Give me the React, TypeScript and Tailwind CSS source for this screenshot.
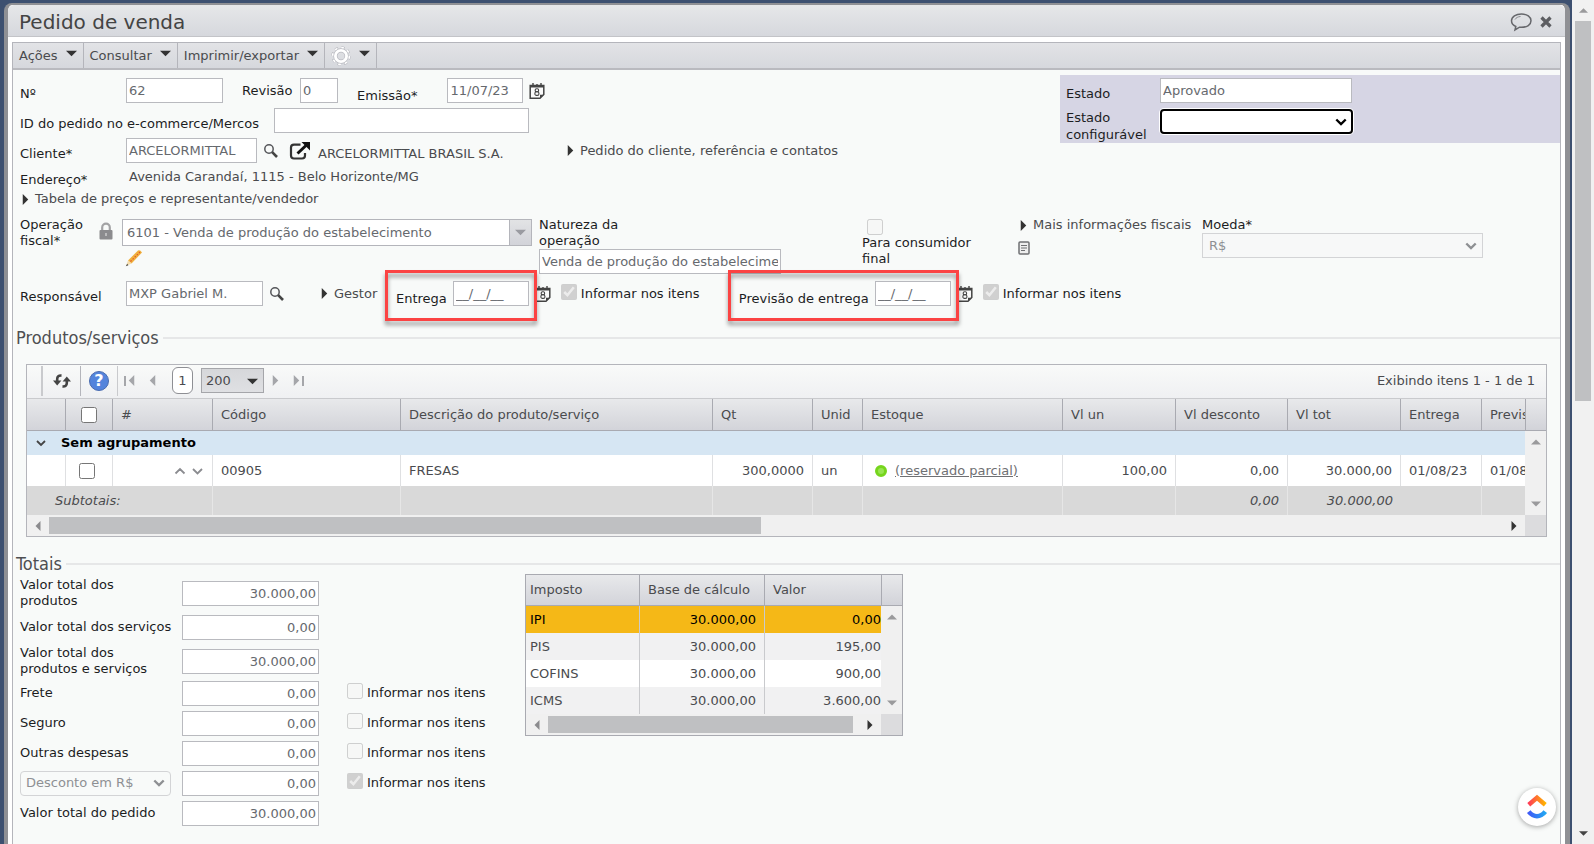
import { useState } from 'react'
import type { ReactNode } from 'react'
import clsx from 'clsx'

const inputClass = 'h-[25px] border border-[#b9babf] bg-white px-0.5 text-[13px] text-[#66696e] outline-none'

const gridColumns = [39, 47, 100, 188, 312, 100, 50, 200, 113, 112, 113, 81, 120]
const gridHeaders = ['#', 'Código', 'Descrição do produto/serviço', 'Qt', 'Unid', 'Estoque', 'Vl un', 'Vl desconto', 'Vl tot', 'Entrega', 'Previsão']

const taxes = [
  { name: 'IPI', base: '30.000,00', value: '0,00' },
  { name: 'PIS', base: '30.000,00', value: '195,00' },
  { name: 'COFINS', base: '30.000,00', value: '900,00' },
  { name: 'ICMS', base: '30.000,00', value: '3.600,00' },
]

const totals = [
  { id: 'total-produtos', label: 'Valor total dos produtos', value: '30.000,00', tall: true },
  { id: 'total-servicos', label: 'Valor total dos serviços', value: '0,00', tall: true },
  { id: 'total-geral', label: 'Valor total dos produtos e serviços', value: '30.000,00', tall: true },
  { id: 'frete', label: 'Frete', value: '0,00', check: true },
  { id: 'seguro', label: 'Seguro', value: '0,00', check: true },
  { id: 'outras', label: 'Outras despesas', value: '0,00', check: true },
  { id: 'desconto', label: 'Desconto em R$', value: '0,00', check: true, checked: true, select: true },
  { id: 'total-pedido', label: 'Valor total do pedido', value: '30.000,00' },
]

type Direction = 'up' | 'down' | 'left' | 'right'

const arrowPaths: Record<Direction, string> = {
  up: 'M0 7.5L5 2.5L10 7.5Z',
  down: 'M0 2.5L5 7.5L10 2.5Z',
  left: 'M7.5 0L2.5 5L7.5 10Z',
  right: 'M2.5 0L7.5 5L2.5 10Z',
}

function Arrow({ dir, className }: { dir: Direction; className?: string }) {
  return (
    <svg viewBox="0 0 10 10" className={clsx('shrink-0 fill-current', className)} aria-hidden="true">
      <path d={arrowPaths[dir]} />
    </svg>
  )
}

function SearchIcon() {
  return (
    <svg viewBox="0 0 16 16" className="h-4 w-4" fill="none" aria-hidden="true">
      <circle cx="6" cy="6" r="4.2" stroke="#55565a" strokeWidth="1.5" />
      <path d="M9.2 9.2L14 14" stroke="#444" strokeWidth="2.6" />
    </svg>
  )
}

function CalendarIcon() {
  return (
    <svg viewBox="0 0 16 18" className="h-[18px] w-4" fill="none" aria-hidden="true">
      <path d="M1.2 3.5H14.8V12.5L11 16.2H1.2Z" fill="#fafafa" stroke="#444" strokeWidth="1.5" />
      <path d="M1 4.3H15" stroke="#444" strokeWidth="2.4" />
      <path d="M4 1V3.5M12 1V3.5M8 2V3" stroke="#444" strokeWidth="1.4" />
      <path d="M11 16V12.7H14.6Z" fill="#444" />
      <rect x="6.2" y="6.7" width="3.4" height="3" rx="1.3" stroke="#444" strokeWidth="1.1" />
      <rect x="5.9" y="9.8" width="4" height="3.6" rx="1.5" stroke="#444" strokeWidth="1.1" />
    </svg>
  )
}

function LockIcon() {
  return (
    <svg viewBox="0 0 14 18" className="h-[18px] w-3.5" fill="none" aria-hidden="true">
      <path d="M3.2 9V5.5a3.8 3.8 0 0 1 7.6 0V9" stroke="#a3a3a5" strokeWidth="2.2" />
      <rect x="0.5" y="8" width="13" height="9.5" rx="1" fill="#8b8b8e" />
      <path d="M7 11V14" stroke="#c8c8ca" strokeWidth="1.6" />
    </svg>
  )
}

function PencilIcon() {
  return (
    <svg viewBox="0 0 18 18" className="h-[18px] w-[18px]" fill="none" aria-hidden="true">
      <path d="M3 11.5L13 1.5Q15 0.5 17 3.5L6.5 14.5Z" fill="#f0b03c" />
      <path d="M3 11.5L6.5 14.5L1 17Z" fill="#f3dcae" />
      <path d="M2.2 14.8L0.8 17.2L3.4 16.2Z" fill="#444" />
      <path d="M5.5 12.5L15 3" stroke="#e0572e" strokeWidth="1.2" strokeDasharray="1.5 1.5" />
    </svg>
  )
}

function ExternalIcon() {
  return (
    <svg viewBox="0 0 22 20" className="h-5 w-[22px]" fill="none" aria-hidden="true">
      <path d="M11.5 3.6H5Q2 3.6 2 6.6V14.5Q2 17.5 5 17.5H13Q16 17.5 16 14.5V12" stroke="#333" strokeWidth="2.2" />
      <path d="M8.5 12.5L17.5 4" stroke="#111" strokeWidth="3" />
      <path d="M12.5 1H21V9.5Z" fill="#111" />
    </svg>
  )
}

function GearIcon() {
  return (
    <svg viewBox="0 0 20 20" className="h-5 w-5" fill="none" aria-hidden="true">
      <circle cx="10" cy="10" r="8" stroke="#b9bac0" strokeWidth="3.4" strokeDasharray="3.2 3.08" />
      <circle cx="10" cy="10" r="8" stroke="#fff" strokeWidth="2.4" strokeDasharray="2.6 3.68" />
      <circle cx="10" cy="10" r="5.6" stroke="#b9bac0" strokeWidth="4.2" />
      <circle cx="10" cy="10" r="5.6" stroke="#fff" strokeWidth="2.8" />
    </svg>
  )
}

function RefreshIcon() {
  return (
    <svg viewBox="0 0 20 16" className="h-4 w-5" fill="none" aria-hidden="true">
      <path d="M9.5 2.6Q5.200 2.200 5.200 6V9" stroke="#444" strokeWidth="2.6" />
      <path d="M1 7.500H9.400L5.200 12.500Z" fill="#444" />
      <path d="M10.500 13.400Q14.800 13.800 14.800 10V7" stroke="#444" strokeWidth="2.6" />
      <path d="M10.600 8.500H19L14.800 3.500Z" fill="#444" />
    </svg>
  )
}

function ChatIcon() {
  return (
    <svg viewBox="0 0 22 20" className="h-5 w-[22px]" fill="none" aria-hidden="true">
      <path
        d="M11.5 2C5.800 2 1.500 4.800 1.500 8.800c0 2.600 1.700 4.600 4.300 5.700L5 18l4.500-2.800c.7.100 1.300.100 2 .100 5.500 0 9.500-2.600 9.500-6.500S17 2 11.500 2Z"
        stroke="#66676b"
        strokeWidth="1.5"
      />
      <path d="M5 7.500C6 5.700 8 4.700 10.500 4.500" stroke="#8b8c90" strokeWidth="1" />
    </svg>
  )
}

function Chevron() {
  return (
    <svg viewBox="0 0 12 8" className="pointer-events-none absolute top-1/2 right-1.5 h-2 w-3 -translate-y-1/2" fill="none" aria-hidden="true">
      <path d="M1.300 1.500L6 6L10.700 1.500" stroke="currentColor" strokeWidth="2.4" />
    </svg>
  )
}

function DateField({ id, label, value, gap, highlight }: { id: string; label: string; value: string; gap: string; highlight?: boolean }) {
  const [date, setDate] = useState(value)
  return (
    <div className="flex items-start">
      <div className={clsx('relative flex h-[26px] items-end', gap)}>
        <label htmlFor={id} className="whitespace-nowrap leading-4">{label}</label>
        <input id={id} value={date} onChange={(e) => setDate(e.target.value)} className={clsx(inputClass, 'w-[76px] self-start')} />
        {highlight && (
          <span className="pointer-events-none absolute -top-[11px] -right-2 -bottom-3.5 -left-[11px] z-10 border-3 border-[#fb4343] drop-shadow-[0_4px_2px_rgba(0,0,0,0.4)]" />
        )}
      </div>
      <button type="button" aria-label="Calendário" className="mt-1 ml-1.5 flex">
        <CalendarIcon />
      </button>
    </div>
  )
}

function InformCheck({ id, checked }: { id: string; checked?: boolean }) {
  return (
    <div className="flex items-start gap-1 whitespace-nowrap leading-5">
      <input id={id} type="checkbox" disabled defaultChecked={checked} className="h-4 w-4" />
      <label htmlFor={id}>Informar nos itens</label>
    </div>
  )
}

function Disclosure({ children, className }: { children: ReactNode; className?: string }) {
  return (
    <button type="button" className={clsx('flex items-center gap-1 whitespace-nowrap leading-4 text-[#4a4b4e]', className)}>
      <Arrow dir="right" className="h-[11px] w-[11px] text-[#333]" />
      {children}
    </button>
  )
}

function MenuItem({ children, label }: { children?: ReactNode; label?: string }) {
  return (
    <button type="button" aria-label={label} className="flex h-full items-center gap-2 border-r border-[#b4b5bb] px-1.5 whitespace-nowrap">
      {children}
      <Arrow dir="down" className="-mt-1 h-[11px] w-[11px] text-[#333]" />
    </button>
  )
}

function SectionTitle({ children }: { children: ReactNode }) {
  return (
    <div className="flex items-center gap-1 pl-[3px]">
      <h2 className="font-['DejaVu_Sans_Condensed','DejaVu_Sans',sans-serif] text-lg leading-5 text-[#4e4f52]">{children}</h2>
      <div className="h-0.5 flex-1 bg-[#e6e7e8]" />
    </div>
  )
}

function VerticalTrack() {
  return (
    <div className="flex flex-1 flex-col items-center justify-between bg-[#f0f0f0] py-1.5 text-[#9a9a9c]">
      <Arrow dir="up" className="h-2.5 w-2.5" />
      <Arrow dir="down" className="h-2.5 w-2.5" />
    </div>
  )
}

function HorizontalTrack({ thumb }: { thumb: string }) {
  return (
    <div className="flex h-[21px] items-center bg-[#f0f0f0]">
      <Arrow dir="left" className="mx-1.5 h-2.5 w-2.5 text-[#8b8b8e]" />
      <div className="flex flex-1">
        <div className={clsx('h-[17px] bg-[#bfc0c2]', thumb)} />
      </div>
      <Arrow dir="right" className="mx-1.5 h-2.5 w-2.5 text-[#333]" />
    </div>
  )
}

function OrderHeader() {
  return (
    <div className="flex items-start">
      <div className="flex-1 pt-2 pl-[7px]">
        <div className="flex h-[25px] items-start">
          <label htmlFor="numero" className="w-[106px] self-end leading-[18px]">Nº</label>
          <input id="numero" defaultValue="62" className={clsx(inputClass, 'w-[97px]')} />
          <label htmlFor="revisao" className="ml-[19px] w-[58px] self-center">Revisão</label>
          <input id="revisao" defaultValue="0" className={clsx(inputClass, 'mr-[19px] w-[38px]')} />
          <DateField id="emissao" label="Emissão*" value="11/07/23" gap="gap-[30px]" />
        </div>
        <div className="mt-[5px] flex items-start">
          <label htmlFor="ecommerce" className="w-[254px] self-end whitespace-nowrap leading-[18px]">ID do pedido no e-commerce/Mercos</label>
          <input id="ecommerce" className={clsx(inputClass, 'w-[255px]')} />
        </div>
        <div className="mt-[5px] flex items-start">
          <label htmlFor="cliente" className="w-[106px] self-end leading-[18px]">Cliente*</label>
          <input id="cliente" defaultValue="ARCELORMITTAL" className={clsx(inputClass, 'w-[131px]')} />
          <button type="button" aria-label="Pesquisar cliente" className="ml-1.5 self-center"><SearchIcon /></button>
          <a href="#cliente" aria-label="Abrir cliente" className="ml-2.5 self-center"><ExternalIcon /></a>
          <span className="ml-[7px] w-[247px] self-end whitespace-nowrap leading-[18px] text-[#4a4b4e]">ARCELORMITTAL BRASIL S.A.</span>
          <Disclosure className="self-center">Pedido do cliente, referência e contatos</Disclosure>
        </div>
        <div className="mt-[5px] flex h-[21px] items-start leading-[18px]">
          <span className="w-[109px] self-end">Endereço*</span>
          <span className="text-[#4a4b4e]">Avenida Carandaí, 1115 - Belo Horizonte/MG</span>
        </div>
        <Disclosure className="mt-0.5">Tabela de preços e representante/vendedor</Disclosure>
      </div>
      <div className="mt-[5px] w-[500px] space-y-1.5 bg-[#d6d5e4] pt-[3px] pl-1.5">
        <div className="flex items-end">
          <label htmlFor="estado" className="w-[94px] leading-[18px]">Estado</label>
          <input id="estado" defaultValue="Aprovado" className={clsx(inputClass, 'w-[192px]')} />
        </div>
        <div className="flex items-start">
          <label htmlFor="estado-config" className="w-[94px] leading-[17px]">Estado configurável</label>
          <div className="relative w-[193px] text-black">
            <select id="estado-config" className="h-[25px] w-full appearance-none rounded border-2 border-black bg-white ring-1 ring-white">
              <option></option>
            </select>
            <Chevron />
          </div>
        </div>
      </div>
    </div>
  )
}

function FiscalRow() {
  return (
    <div className="mt-2.5 flex items-start pl-[7px] leading-4">
      <label htmlFor="operacao" className="w-[79px]">Operação fiscal*</label>
      <div className="w-[23px] pt-[5px]"><LockIcon /></div>
      <div className="w-[417px]">
        <div className="mt-0.5 flex w-[410px] border border-[#b4b5bb]">
          <input id="operacao" defaultValue="6101 - Venda de produção do estabelecimento" className="h-[25px] flex-1 bg-white px-1 text-[#66696e] outline-none" />
          <button type="button" aria-label="Abrir lista" className="flex w-[22px] items-center justify-center border-l border-[#b4b5bb] bg-linear-to-b from-[#e2e3e5] to-[#d2d3d9] text-[#9a9ba1]">
            <Arrow dir="down" className="h-[11px] w-[11px]" />
          </button>
        </div>
        <button type="button" aria-label="Editar operação" className="mt-[3px] ml-[3px] block"><PencilIcon /></button>
      </div>
      <div className="flex w-[323px] flex-col items-start">
        <label htmlFor="natureza" className="w-[110px]">Natureza da operação</label>
        <input id="natureza" defaultValue="Venda de produção do estabelecimento" className={clsx(inputClass, 'w-[242px]')} />
      </div>
      <div className="flex w-[156px] flex-col items-start pt-0.5">
        <input id="consumidor" type="checkbox" disabled className="ml-[5px] h-4 w-4" />
        <label htmlFor="consumidor" className="w-[120px]">Para consumidor final</label>
      </div>
      <div className="w-[184px]">
        <Disclosure>Mais informações fiscais</Disclosure>
        <svg viewBox="0 0 12 14" className="mt-2 h-3.5 w-3" fill="none" aria-hidden="true">
          <rect x="1" y="1" width="10" height="12" rx="1" fill="#eee" stroke="#6f7073" strokeWidth="1.5" />
          <path d="M3 4.500H9M3 7H9M3 9.500H7" stroke="#6f7073" strokeWidth="1.2" />
        </svg>
      </div>
      <div className="flex flex-col items-start">
        <label htmlFor="moeda">Moeda*</label>
        <div className="relative w-[281px] text-[#8e9093]">
          <select id="moeda" disabled className="h-[25px] w-full appearance-none border border-[#d3d4d6] bg-[#f7f8f8] px-1.5">
            <option>R$</option>
          </select>
          <Chevron />
        </div>
      </div>
    </div>
  )
}

function ResponsibleRow() {
  return (
    <div className="mt-[7px] flex h-[25px] items-start pl-[7px]">
      <label htmlFor="responsavel" className="w-[106px] self-end leading-[18px]">Responsável</label>
      <input id="responsavel" defaultValue="MXP Gabriel M." className={clsx(inputClass, 'w-[137px]')} />
      <button type="button" aria-label="Pesquisar responsável" className="ml-1.5 self-center"><SearchIcon /></button>
      <Disclosure className="ml-[34px] w-[77px] self-center">Gestor</Disclosure>
      <DateField id="entrega" label="Entrega" value="__/__/__" gap="gap-1.5" highlight />
      <div className="ml-2.5 w-[178px] self-center"><InformCheck id="entrega-itens" checked /></div>
      <DateField id="previsao" label="Previsão de entrega" value="__/__/__" gap="gap-1.5" highlight />
      <div className="ml-2.5 self-center"><InformCheck id="previsao-itens" checked /></div>
    </div>
  )
}

function ProductGrid() {
  const [allChecked, setAllChecked] = useState(false)
  const cell = 'border-r border-[#dfe0e2] px-2'
  return (
    <div className="mr-[13px] ml-[13px] border border-[#b4b5bb] text-[#4a4b4e]">
      <div className="flex h-[34px] items-center border-b border-[#c9cacd] bg-linear-to-b from-[#f9faf9] to-[#eff0f2] pb-0.5">
        <div className="h-[30px] w-4 border-r-2 border-[#c9cacd]" />
        <button type="button" aria-label="Atualizar" className="flex h-[30px] w-[38px] items-center justify-center border-r border-[#b4b5bb]"><RefreshIcon /></button>
        <button type="button" aria-label="Ajuda" className="flex h-[30px] w-[37px] items-center justify-center border-r border-[#c9cacd]">
          <span className="flex h-5 w-5 items-center justify-center rounded-full border border-[#4a6cb0] bg-[#5484dc] text-base font-bold text-white">?</span>
        </button>
        <button type="button" aria-label="Primeira página" className="ml-1.5 flex items-center text-[#a5a6aa]">
          <span className="h-2.5 w-0.5 bg-current" />
          <Arrow dir="left" className="h-[11px] w-[11px]" />
        </button>
        <button type="button" aria-label="Página anterior" className="ml-2.5 text-[#a5a6aa]"><Arrow dir="left" className="h-[11px] w-[11px]" /></button>
        <button type="button" className="ml-3.5 h-[27px] w-[21px] rounded-md border border-[#8e8f94] bg-white">1</button>
        <div className="relative ml-2">
          <select aria-label="Itens por página" className="h-[25px] w-[63px] appearance-none border border-[#a5a6aa] bg-linear-to-b from-[#d6d7da] to-[#dfe0e3] px-1">
            <option>200</option>
          </select>
          <Arrow dir="down" className="pointer-events-none absolute top-2 right-1.5 h-[11px] w-[11px] text-[#333]" />
        </div>
        <button type="button" aria-label="Próxima página" className="ml-1.5 text-[#a5a6aa]"><Arrow dir="right" className="h-[11px] w-[11px]" /></button>
        <button type="button" aria-label="Última página" className="ml-2.5 flex items-center text-[#a5a6aa]">
          <Arrow dir="right" className="h-[11px] w-[11px]" />
          <span className="h-2.5 w-0.5 bg-current" />
        </button>
        <span className="ml-auto pr-[11px]">Exibindo itens 1 - 1 de 1</span>
      </div>
      <div className="flex">
        <div className="min-w-0 flex-1 overflow-hidden">
          <table className="w-[1575px] table-fixed border-separate border-spacing-0">
            <colgroup>
              {gridColumns.map((width, i) => (
                <col key={i} style={{ width }} />
              ))}
            </colgroup>
            <thead>
              <tr className="h-8 bg-linear-to-b from-[#e8e9eb] to-[#d2d3d9] text-left">
                <th className="border-r border-b border-[#a9aab1]" />
                <th className="border-r border-b border-[#a9aab1] text-center">
                  <input type="checkbox" aria-label="Selecionar todos" checked={allChecked} onChange={() => setAllChecked(!allChecked)} className="h-4 w-4 align-middle" />
                </th>
                {gridHeaders.map((header) => (
                  <th key={header} className="border-r border-b border-[#a9aab1] px-2 font-normal whitespace-nowrap">{header}</th>
                ))}
              </tr>
            </thead>
            <tbody>
              <tr className="h-6 bg-[#d6e6f3]">
                <td colSpan={13}>
                  <button type="button" className="flex items-center gap-3.5 pl-2 font-bold text-black">
                    <svg viewBox="0 0 12 12" className="h-3 w-3" fill="none" aria-hidden="true">
                      <path d="M2 4L6 8L10 4" stroke="#444" strokeWidth="1.800" />
                    </svg>
                    Sem agrupamento
                  </button>
                </td>
              </tr>
              <tr className="h-[31px] bg-white">
                <td className={cell} />
                <td className="border-r border-[#dfe0e2] pr-1 text-center">
                  <input type="checkbox" aria-label="Selecionar FRESAS" className="h-4 w-4 align-middle" />
                </td>
                <td className={cell}>
                  <svg viewBox="0 0 30 10" className="ml-auto h-2.5 w-[30px]" fill="none" stroke="#8b8c90" strokeWidth="1.800" aria-hidden="true">
                    <path d="M1.500 7.500L6 3L10.500 7.500M19 3L23.500 7.500L28 3" />
                  </svg>
                </td>
                <td className={cell}>00905</td>
                <td className={cell}>FRESAS</td>
                <td className={clsx(cell, 'text-right')}>300,0000</td>
                <td className={cell}>un</td>
                <td className={cell}>
                  <div className="flex items-center gap-2 pl-1">
                    <span className="h-3 w-3 rounded-full border-3 border-[#76d51d] bg-[#98e552]" />
                    <a href="#estoque" className="text-[#6f7073] underline">(reservado parcial)</a>
                  </div>
                </td>
                <td className={clsx(cell, 'text-right')}>100,00</td>
                <td className={clsx(cell, 'text-right')}>0,00</td>
                <td className={clsx(cell, 'text-right')}>30.000,00</td>
                <td className={cell}>01/08/23</td>
                <td className={cell}>01/08/23</td>
              </tr>
              <tr className="h-[29px] bg-[#d9d9d9] italic">
                <td colSpan={3} className="border-r border-[#e6e6e6] pl-7">Subtotais:</td>
                <td className="border-r border-[#e6e6e6]" />
                <td className="border-r border-[#e6e6e6]" />
                <td className="border-r border-[#e6e6e6]" />
                <td className="border-r border-[#e6e6e6]" />
                <td className="border-r border-[#e6e6e6]" />
                <td className="border-r border-[#e6e6e6]" />
                <td className="border-r border-[#e6e6e6] px-2 text-right">0,00</td>
                <td className="px-2 text-right">30.000,00</td>
                <td className="border-r border-[#e6e6e6]" />
                <td />
              </tr>
            </tbody>
          </table>
          <HorizontalTrack thumb="w-[49%]" />
        </div>
        <div className="flex w-[21px] flex-col">
          <div className="h-8 border-b border-l border-[#a9aab1] bg-linear-to-b from-[#e8e9eb] to-[#d2d3d9]" />
          <VerticalTrack />
          <div className="h-[21px] bg-[#dcdcde]" />
        </div>
      </div>
    </div>
  )
}

function TaxTable() {
  return (
    <div className="flex w-[378px] border border-[#a9aab1] text-[#4a4b4e]">
      <div className="min-w-0 flex-1">
        <table className="w-full table-fixed border-separate border-spacing-0">
          <thead>
            <tr className="h-[31px] bg-linear-to-b from-[#e8e9eb] to-[#d2d3d9] text-left">
              <th className="w-[114px] border-r border-b border-[#a9aab1] pl-1 font-normal">Imposto</th>
              <th className="w-[125px] border-r border-b border-[#a9aab1] pl-2 font-normal whitespace-nowrap">Base de cálculo</th>
              <th className="border-b border-[#a9aab1] pl-2 font-normal">Valor</th>
            </tr>
          </thead>
          <tbody>
            {taxes.map((tax, i) => (
              <tr key={tax.name} className={clsx('h-[27px]', i === 0 ? 'bg-[#f5b817] text-black' : i === 2 ? 'bg-white' : 'bg-[#f1f1f2]')}>
                <td className="border-r border-[#c9cacd] pl-1">{tax.name}</td>
                <td className="border-r border-[#c9cacd] pr-2 text-right">{tax.base}</td>
                <td className="text-right">{tax.value}</td>
              </tr>
            ))}
          </tbody>
        </table>
        <HorizontalTrack thumb="w-[98%]" />
      </div>
      <div className="flex w-[21px] flex-col">
        <div className="h-[31px] border-b border-l border-[#a9aab1] bg-linear-to-b from-[#e8e9eb] to-[#d2d3d9]" />
        <VerticalTrack />
        <div className="h-[21px] bg-[#dcdcde]" />
      </div>
    </div>
  )
}

function Totals() {
  return (
    <div className="flex items-start pl-[7px]">
      <div className="w-[505px] pt-0.5">
        {totals.map((row) => (
          <div key={row.id} className={clsx('flex items-center leading-4', row.tall ? 'h-[34px]' : 'h-[30px]')}>
            <div className="w-[162px]">
              {row.select ? (
                <div className="relative w-[151px] text-[#8e9093]">
                  <select aria-label="Tipo de desconto" disabled className="h-[25px] w-full appearance-none rounded-sm border border-[#d3d4d6] px-[5px]">
                    <option>{row.label}</option>
                  </select>
                  <Chevron />
                </div>
              ) : (
                <label htmlFor={row.id} className="block w-[153px]">{row.label}</label>
              )}
            </div>
            <input id={row.id} aria-label={row.label} defaultValue={row.value} className={clsx(inputClass, 'mr-7 w-[137px] text-right')} />
            {row.check && <InformCheck id={`${row.id}-itens`} checked={row.checked} />}
          </div>
        ))}
      </div>
      <TaxTable />
    </div>
  )
}

export default function App() {
  return (
    <div className="flex h-screen overflow-hidden bg-[#3d5070] font-['Verdana','DejaVu_Sans',sans-serif] text-[13px] text-[#1c1d1f]">
      <div className="mt-[3px] mr-0.5 ml-1 flex min-w-0 flex-1 flex-col rounded-t-lg border-t-2 border-r-5 border-l-4 border-[#8f9094] bg-white">
        <header className="flex h-8 shrink-0 items-center rounded-t-md border-b border-[#c3c4c8] bg-linear-to-b from-[#e6e7e9] to-[#d6d8dd] pt-[3px] pr-[13px] pl-[11px]">
          <h1 className="flex-1 text-xl leading-6 text-[#444]">Pedido de venda</h1>
          <button type="button" aria-label="Comentários"><ChatIcon /></button>
          <button type="button" aria-label="Fechar" className="ml-2">
            <svg viewBox="0 0 12 12" className="h-3 w-3" aria-hidden="true">
              <path d="M1.500 1.500L10.500 10.500M10.500 1.500L1.500 10.500" stroke="#5d5e62" strokeWidth="3.200" />
            </svg>
          </button>
        </header>
        <main className="mx-1 mt-[5px] flex-1 overflow-hidden border border-b-0 border-[#b4b5bb] bg-[#f8faf9]">
          <nav className="flex h-[27px] items-center border-b-2 border-[#b9babf] bg-linear-to-b from-[#e2e3e6] to-[#d6d8dd] text-[#4a4b4e]">
            <MenuItem>Ações</MenuItem>
            <MenuItem>Consultar</MenuItem>
            <MenuItem>Imprimir/exportar</MenuItem>
            <MenuItem label="Configurações"><GearIcon /></MenuItem>
          </nav>
          <OrderHeader />
          <FiscalRow />
          <ResponsibleRow />
          <div className="mt-[22px] mb-4">
            <SectionTitle>Produtos/serviços</SectionTitle>
          </div>
          <ProductGrid />
          <div className="mt-[17px]">
            <SectionTitle>Totais</SectionTitle>
          </div>
          <Totals />
        </main>
      </div>
      <div className="flex w-[22px] flex-col items-center bg-[#f1f1f1] text-[#9a9a9c]">
        <Arrow dir="up" className="my-1.5 h-[9px] w-[9px]" />
        <div className="h-[45%] w-4 bg-[#bfc0c2]" />
        <Arrow dir="down" className="mt-auto mb-1.5 h-[9px] w-[9px] text-[#444]" />
      </div>
      <button type="button" aria-label="ClickUp" className="fixed right-[38px] bottom-[18px] flex h-[38px] w-[38px] items-center justify-center rounded-full bg-white shadow-[0_1px_5px_rgba(0,0,0,0.35)]">
        <svg viewBox="0 0 24 28" className="h-[26px] w-[22px]" fill="none" aria-hidden="true">
          <defs>
            <linearGradient id="roof" x1="0" x2="1">
              <stop offset="0" stopColor="#ff3d57" />
              <stop offset="1" stopColor="#ffb400" />
            </linearGradient>
            <linearGradient id="smile" x1="0" x2="1">
              <stop offset="0" stopColor="#3f5bf6" />
              <stop offset="1" stopColor="#22a6f2" />
            </linearGradient>
          </defs>
          <path d="M3 11.500L12 4L21 11.500" stroke="url(#roof)" strokeWidth="5" />
          <path d="M3 19Q7 24 12 24T21 19" stroke="url(#smile)" strokeWidth="5" />
        </svg>
      </button>
    </div>
  )
}
